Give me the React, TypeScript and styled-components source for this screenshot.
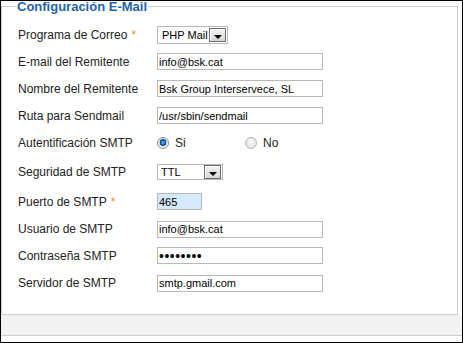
import styled, { createGlobalStyle } from 'styled-components';

const GlobalStyle = createGlobalStyle`
  body {
    margin: 0;
    background: #fff;
    font-family: "Liberation Sans", Arial, sans-serif;
  }
`;

const Frame = styled.div`
  width: 463px;
  height: 343px;
  box-sizing: border-box;
  border: 1px solid #000;
  background: #fff;
  display: flex;
  flex-direction: column;
`;

const Fieldset = styled.fieldset`
  margin: 0 4px 0 0;
  border: 1px solid #cccccc;
  padding: 0 0 17px 14px;
  min-width: 0;
`;

const Legend = styled.legend`
  padding: 0 1px;
  font-size: 13px;
  font-weight: bold;
  line-height: 11px;
  color: #2462a8;
`;

const Rows = styled.div`
  margin-top: 10px;
  display: flex;
  flex-direction: column;
`;

const Row = styled.div<{ $h: number }>`
  display: grid;
  grid-template-columns: 139px auto;
  align-items: center;
  height: ${(p) => p.$h}px;
  padding-left: 2px;
`;

const Label = styled.label`
  font-size: 12px;
  color: #222;
`;

const Required = styled.span`
  color: #f08a24;
  margin-left: 4px;
`;

const TextInput = styled.input<{ $w?: number; $bg?: string }>`
  width: ${(p) => p.$w ?? 166}px;
  height: 17px;
  box-sizing: border-box;
  border: 1px solid #b8b8b8;
  padding: 0 1px;
  margin: 0;
  font-family: "Liberation Sans", Arial, sans-serif;
  font-size: 11px;
  color: #000;
  background: ${(p) => p.$bg ?? '#fff'};
  outline: none;

  &[type='password'] {
    font-size: 14px;
    letter-spacing: 0.5px;
  }
`;

const SelectBox = styled.div<{ $w: number; $h: number }>`
  display: flex;
  align-items: center;
  justify-content: space-between;
  width: ${(p) => p.$w}px;
  height: ${(p) => p.$h}px;
  box-sizing: border-box;
  border: 1px solid #b8b8b8;
  padding: 0 1px 0 ${(p) => (p.$w > 68 ? 4 : 3)}px;
  font-size: 11px;
  color: #000;
`;

const ArrowButton = styled.span`
  position: relative;
  width: 17px;
  height: 14px;
  box-sizing: border-box;
  border: 1px solid #6d6d6d;
  background: linear-gradient(#f4f4f4, #d6d6d6);
  box-shadow: inset 1px 1px 0 #fff;

  &::after {
    content: '';
    position: absolute;
    left: 4px;
    top: 6px;
    border-left: 4px solid transparent;
    border-right: 4px solid transparent;
    border-top: 4px solid #000;
  }
`;

const RadioGroup = styled.div`
  display: flex;
  align-items: center;
`;

const RadioOption = styled.label`
  display: flex;
  align-items: center;
  width: 88px;
  font-size: 12px;
  color: #222;
`;

const RadioDot = styled.span<{ $checked?: boolean }>`
  width: 12px;
  height: 12px;
  box-sizing: border-box;
  border-radius: 50%;
  margin-right: 6px;
  border: 1px solid ${(p) => (p.$checked ? '#8a8a8a' : '#b4b4b4')};
  background: ${(p) =>
    p.$checked
      ? 'radial-gradient(circle at 50% 45%, #7cc4f4 0, #2a7fd0 1.5px, #134d8c 3.2px, #d8d8d8 3.6px, #f6f6f6 5px)'
      : 'radial-gradient(circle at 50% 40%, #fcfcfc 0, #e6e6e6 5px)'};
`;

const Footer = styled.div`
  height: 20px;
  background: #f2f2f2;
  border-bottom: 1px solid #cccccc;
`;

function FakeSelect({ value, w, h }: { value: string; w: number; h: number }) {
  return (
    <SelectBox $w={w} $h={h}>
      <span>{value}</span>
      <ArrowButton />
    </SelectBox>
  );
}

export default function App() {
  return (
    <>
      <GlobalStyle />
      <Frame>
        <Fieldset>
          <Legend>Configuración E-Mail</Legend>
          <Rows>
            <Row $h={26}>
              <Label>Programa de Correo<Required>*</Required></Label>
              <FakeSelect value="PHP Mail" w={71} h={18} />
            </Row>
            <Row $h={27}>
              <Label>E-mail del Remitente</Label>
              <TextInput defaultValue="info@bsk.cat" />
            </Row>
            <Row $h={27}>
              <Label>Nombre del Remitente</Label>
              <TextInput defaultValue="Bsk Group Interservece, SL" />
            </Row>
            <Row $h={27}>
              <Label>Ruta para Sendmail</Label>
              <TextInput defaultValue="/usr/sbin/sendmail" />
            </Row>
            <Row $h={28}>
              <Label>Autentificación SMTP</Label>
              <RadioGroup>
                <RadioOption><RadioDot $checked />Si</RadioOption>
                <RadioOption><RadioDot />No</RadioOption>
              </RadioGroup>
            </Row>
            <Row $h={30}>
              <Label>Seguridad de SMTP</Label>
              <FakeSelect value="TTL" w={66} h={16} />
            </Row>
            <Row $h={29}>
              <Label>Puerto de SMTP<Required>*</Required></Label>
              <TextInput $w={45} $bg="#d6e9fd" defaultValue="465" />
            </Row>
            <Row $h={26}>
              <Label>Usuario de SMTP</Label>
              <TextInput defaultValue="info@bsk.cat" />
            </Row>
            <Row $h={27}>
              <Label>Contraseña SMTP</Label>
              <TextInput type="password" defaultValue="password" />
            </Row>
            <Row $h={28}>
              <Label>Servidor de SMTP</Label>
              <TextInput defaultValue="smtp.gmail.com" />
            </Row>
          </Rows>
        </Fieldset>
        <Footer />
      </Frame>
    </>
  );
}
